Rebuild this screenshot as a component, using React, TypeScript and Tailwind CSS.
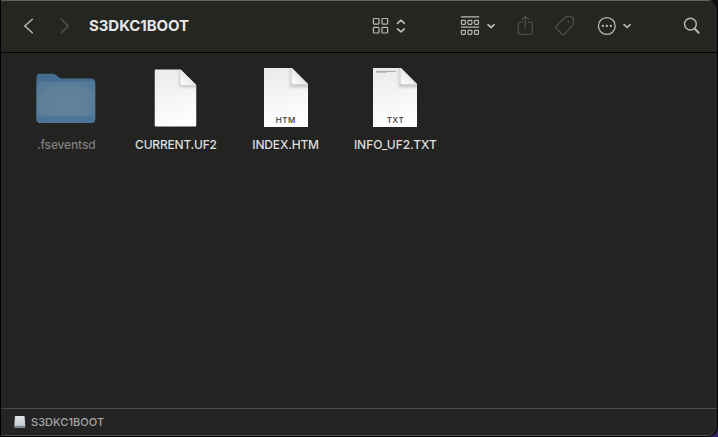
import type { ReactNode } from 'react';

function DocumentIcon({ id, preview, rounded }: { id: string; preview?: boolean; rounded?: boolean }) {
  return (
    <svg width="46" height="61" viewBox={rounded ? '0.5 0 46 61' : '0 0 46 61'} className="block">
      <defs>
        <linearGradient id={`${id}-page`} x1="0" y1="0" x2="0.25" y2="1">
          <stop offset="0" stopColor="#e9e9e9" />
          <stop offset="0.6" stopColor="#f6f6f6" />
          <stop offset="1" stopColor="#fdfdfd" />
        </linearGradient>
        <linearGradient id={`${id}-fold`} x1="0" y1="1" x2="0.6" y2="0.4">
          <stop offset="0" stopColor="#ffffff" />
          <stop offset="1" stopColor="#e4e4e4" />
        </linearGradient>
        <filter id={`${id}-soft`} x="-40%" y="-40%" width="180%" height="180%">
          <feGaussianBlur stdDeviation="1.6" />
        </filter>
        <clipPath id={`${id}-clip`}>
          <path d={rounded ? 'M3.3 2.5H28.2L44 18.3V58.2Q44 59.5 42.7 59.5H3.3Q2 59.5 2 58.2V3.8Q2 2.5 3.3 2.5Z' : 'M1 1H29L45 17V60H1Z'} />
        </clipPath>
      </defs>
      <g clipPath={`url(#${id}-clip)`}>
        <rect width="46" height="61" fill={`url(#${id}-page)`} />
        <path d="M28.5 0V17H46V20H27V0Z" fill="#888" opacity="0.5" filter={`url(#${id}-soft)`} />
        <path d={rounded ? 'M28.2 2.5V16.3Q28.2 18.3 30.2 18.3H44Z' : 'M29 1V15Q29 17 31 17H45Z'} fill={`url(#${id}-fold)`} />
      </g>
      {preview && (
        <g stroke="#959595" strokeWidth="0.8">
          <path d="M4 4.4H24" />
          <path d="M4 5.6H15" opacity="0.7" />
        </g>
      )}
    </svg>
  );
}

function FolderIcon() {
  return (
    <svg width="60" height="52" viewBox="0 0 60 52" className="mt-[3px] block">
      <defs>
        <radialGradient id="folder-front" cx="0.5" cy="0.5" r="0.7">
          <stop offset="0" stopColor="#62839b" />
          <stop offset="0.6" stopColor="#5d7f99" />
          <stop offset="1" stopColor="#4d7599" />
        </radialGradient>
      </defs>
      <path d="M0.5 4Q0.5 0.7 4 0.7H16Q18.5 0.7 20 2L23 4.5Q24.5 5.6 27 5.6H55.5Q59.2 5.6 59.2 9V46Q59.2 50 55 50H5Q0.5 50 0.5 46Z" fill="#456d92" />
      <path d="M0.5 12Q0.5 8.8 4 8.8H56Q59.2 8.8 59.2 12V46Q59.2 50 55 50H5Q0.5 50 0.5 46Z" fill="url(#folder-front)" />
      <path d="M0.8 11.5Q1.5 9 4 9H56Q58.4 9 59 11.5" fill="none" stroke="#577b98" strokeWidth="0.8" />
      <path d="M0.5 44H59.2V46Q59.2 50 55 50H5Q0.5 50 0.5 46Z" fill="#4c759a" opacity="0.75" />
      <path d="M0.5 44H59.2M1 47H58.7" stroke="#426b8f" strokeWidth="0.6" />
    </svg>
  );
}

function FileItem({ name, nameClass, badge, children }: { name: string; nameClass: string; badge?: string; children: ReactNode }) {
  return (
    <div className="flex w-[109.7px] flex-col items-center">
      <div className="grid h-[70px] place-items-center">
        <div className="col-start-1 row-start-1">{children}</div>
        {badge && (
          <span className="col-start-1 row-start-1 mb-[7px] self-end pl-[0.5px] text-[8px] leading-[10px] font-medium tracking-[0.55px] text-[#383838]">
            {badge}
          </span>
        )}
      </div>
      <span className={`mt-[5px] text-xs leading-4 font-medium whitespace-nowrap ${nameClass}`}>{name}</span>
    </div>
  );
}

const stroke = { fill: 'none', strokeLinecap: 'round', strokeLinejoin: 'round' } as const;

function Toolbar() {
  return (
    <header className="flex h-[53px] shrink-0 items-center border-t border-b border-t-[#606460] border-b-black bg-[#242622] pb-px pl-[22px]">
      <svg width="12" height="18" viewBox="0.2 0 12 18" {...stroke} stroke="#b9bbb8" strokeWidth="1.5">
        <path d="M9.5 2.2L2 9L9.5 15.8" />
      </svg>
      <svg className="ml-[25px]" width="12" height="18" viewBox="0.5 0 12 18" {...stroke} stroke="#50524f" strokeWidth="1.5">
        <path d="M2 2.2L8.6 9L2 15.8" />
      </svg>
      <h1 className="ml-[17px] w-[282px] text-[15px] leading-5 font-bold tracking-[-0.07px] text-[#e6e7e5]">S3DKC1BOOT</h1>
      <svg width="34" height="20" viewBox="371 16 34 20" {...stroke} stroke="#b7b9b6">
        <g strokeWidth="1.2">
          <rect x="373.4" y="18.5" width="5.6" height="5.6" rx="0.8" />
          <rect x="382" y="18.5" width="5.6" height="5.6" rx="0.8" />
          <rect x="373.4" y="27.4" width="5.6" height="5.6" rx="0.8" />
          <rect x="382" y="27.4" width="5.6" height="5.6" rx="0.8" />
        </g>
        <path d="M397.5 23.3L401 20.2L404.4 23.3M397.5 28.8L401 31.9L404.4 28.8" strokeWidth="1.7" />
      </svg>
      <svg className="ml-[53px]" width="40" height="22" viewBox="458 15 40 22" {...stroke} stroke="#b7b9b6">
        <g strokeWidth="1.2">
          <path d="M461.3 16.9H478.7M461.3 27.1H478.7" />
          <rect x="461.4" y="20.3" width="4" height="4.1" rx="0.8" />
          <rect x="467.9" y="20.3" width="4" height="4.1" rx="0.8" />
          <rect x="474.5" y="20.3" width="4" height="4.1" rx="0.8" />
          <rect x="461.4" y="30.3" width="4" height="4.1" rx="0.8" />
          <rect x="467.9" y="30.3" width="4" height="4.1" rx="0.8" />
          <rect x="474.5" y="30.3" width="4" height="4.1" rx="0.8" />
        </g>
        <path d="M488 24.7L491.1 27.5L494.2 24.7" strokeWidth="1.7" />
      </svg>
      <svg className="ml-[18px]" width="18" height="22" viewBox="516 15 18 22" {...stroke} stroke="#4b4d49" strokeWidth="1.3">
        <path d="M522.3 22.2H520.4Q518.3 22.2 518.3 24.3V32.3Q518.3 34.4 520.4 34.4H530.2Q532.3 34.4 532.3 32.3V24.3Q532.3 22.2 530.2 22.2H528.3M525.3 28V16.5M522.2 19.2L525.3 16.2L528.4 19.2" />
      </svg>
      <svg className="ml-5" width="22" height="22" viewBox="554 15 22 22" {...stroke} stroke="#4b4d49" strokeWidth="1.3">
        <path d="M556.5 25.8L564.7 17.7Q565.8 16.6 567.3 16.6H571Q573.4 16.6 573.4 19V22.8Q573.4 24.3 572.4 25.4L564.7 34Q563.3 35.4 561.9 34L556.5 28.7Q555.1 27.2 556.5 25.8Z" />
        <circle cx="568.3" cy="21.7" r="1" fill="#4b4d49" stroke="none" />
      </svg>
      <svg className="ml-5" width="40" height="22" viewBox="596 15 40 22" {...stroke} stroke="#b7b9b6">
        <circle cx="606.8" cy="26" r="8.4" strokeWidth="1.3" />
        <g fill="#b7b9b6" stroke="none">
          <circle cx="602.8" cy="26" r="1.15" />
          <circle cx="606.8" cy="26" r="1.15" />
          <circle cx="610.8" cy="26" r="1.15" />
        </g>
        <path d="M624.1 24.7L627.1 27.5L630.1 24.7" strokeWidth="1.7" />
      </svg>
      <svg className="ml-[45px]" width="22" height="22" viewBox="681 15 22 22" {...stroke} stroke="#b7b9b6">
        <circle cx="690.4" cy="24.1" r="5.9" strokeWidth="1.4" />
        <path d="M694.8 28.7L698.6 32.8" strokeWidth="2" />
      </svg>
    </header>
  );
}

export default function App() {
  return (
    <div className="h-[437px] w-[718px] overflow-hidden bg-[linear-gradient(180deg,#101010_50%,#38256c)] font-['Inter','Liberation_Sans',sans-serif]">
      <div className="flex h-[437px] flex-col overflow-hidden rounded-tr-[10px] rounded-br-[10px] border-r border-b border-l border-black bg-[#232321]">
        <Toolbar />
        <main className="flex flex-1 items-start pt-[9px] pl-[10.4px]">
          <FileItem name=".fseventsd" nameClass="tracking-[-0.15px] text-[#80807f]">
            <FolderIcon />
          </FileItem>
          <FileItem name="CURRENT.UF2" nameClass="tracking-[-0.2px] text-[#dededd]">
            <DocumentIcon id="current" rounded />
          </FileItem>
          <FileItem name="INDEX.HTM" nameClass="tracking-[-0.15px] text-[#dededd]" badge="HTM">
            <DocumentIcon id="index" />
          </FileItem>
          <FileItem name="INFO_UF2.TXT" nameClass="tracking-[-0.05px] text-[#dededd]" badge="TXT">
            <DocumentIcon id="info" preview />
          </FileItem>
        </main>
        <footer className="flex h-7 shrink-0 items-center gap-[5px] rounded-br-[9px] border-t border-b border-[#4b4b4a] bg-[#242424] pl-3">
          <svg width="13" height="14" viewBox="0 0 13 14">
            <defs>
              <linearGradient id="disk" x1="0" y1="0" x2="0" y2="1">
                <stop offset="0" stopColor="#e3e6e8" />
                <stop offset="1" stopColor="#c0cad2" />
              </linearGradient>
            </defs>
            <path d="M2.6 1H11Q11.6 1 11.6 1.7L12.3 11.3H1.3L1.9 1.7Q1.9 1 2.6 1Z" fill="url(#disk)" />
            <path d="M1.3 11.2H12.3V12.2Q12.3 12.9 11.6 12.9H2Q1.3 12.9 1.3 12.2Z" fill="#858b90" />
          </svg>
          <span className="text-[11px] leading-4 font-medium tracking-[0.05px] text-[#a5a5a5]">S3DKC1BOOT</span>
        </footer>
      </div>
    </div>
  );
}
